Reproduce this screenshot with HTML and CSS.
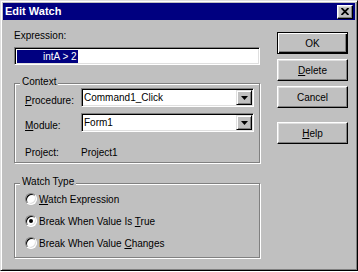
FILE: index.html
```html
<!DOCTYPE html>
<html>
<head>
<meta charset="utf-8">
<link rel="stylesheet" href="styles.css">
</head>
<body>
<div class="window">
  <div class="titlebar">
    <span class="title">Edit Watch</span>
    <span class="close"><svg width="8" height="7" viewBox="0 0 8 7"><path d="M0.5 0 L7.5 7 M7.5 0 L0.5 7" stroke="#000" stroke-width="1.8"/></svg></span>
  </div>
  <div class="content">
    <div class="main">
      <div class="label">Expression:</div>
      <div class="textbox"><span class="sel">intA &gt; 2</span></div>
      <fieldset class="group context">
        <legend>Context</legend>
        <div class="row first">
          <span class="lbl"><u>P</u>rocedure:</span>
          <div class="combo"><span class="val">Command1_Click</span><span class="drop"><svg width="7" height="4" viewBox="0 0 7 4"><path d="M0 0 H7 L3.5 4 Z" fill="#000"/></svg></span></div>
        </div>
        <div class="row second">
          <span class="lbl"><u>M</u>odule:</span>
          <div class="combo"><span class="val">Form1</span><span class="drop"><svg width="7" height="4" viewBox="0 0 7 4"><path d="M0 0 H7 L3.5 4 Z" fill="#000"/></svg></span></div>
        </div>
        <div class="row project">
          <span class="lbl plain">Project:</span>
          <span>Project1</span>
        </div>
      </fieldset>
      <fieldset class="group watch">
        <legend>Watch Type</legend>
        <div class="radio first"><span class="circle"></span><span><u>W</u>atch Expression</span></div>
        <div class="radio"><span class="circle on"></span><span>Break When Value Is <u>T</u>rue</span></div>
        <div class="radio"><span class="circle"></span><span>Break When Value <u>C</u>hanges</span></div>
      </fieldset>
    </div>
    <div class="buttons">
      <div class="btn default">OK</div>
      <div class="btn"><u>D</u>elete</div>
      <div class="btn">Cancel</div>
      <div class="btn help"><u>H</u>elp</div>
    </div>
  </div>
</div>
</body>
</html>
```

FILE: styles.css
```css
html, body {
  margin: 0;
  padding: 0;
  background: #ffffff;
}
body {
  font-family: "Liberation Sans", Arial, sans-serif;
  font-size: 10px;
  color: #000;
}
.window {
  box-sizing: border-box;
  width: 358px;
  height: 271px;
  background: #c0c0c0;
  border: 1px solid;
  border-color: #dfdfdf #000 #000 #dfdfdf;
  box-shadow: inset 1px 1px #fff, inset -1px -1px #808080;
  padding: 2px;
}
.titlebar {
  height: 17px;
  background: #000080;
  display: flex;
  align-items: center;
  justify-content: space-between;
  padding: 0 2px;
}
.title {
  color: #fff;
  font-weight: bold;
  font-size: 11px;
  line-height: 13px;
}
.close {
  box-sizing: border-box;
  width: 16px;
  height: 14px;
  background: #c0c0c0;
  border: 1px solid;
  border-color: #fff #000 #000 #fff;
  box-shadow: inset -1px -1px #808080, inset 1px 1px #dfdfdf;
  display: flex;
  align-items: center;
  justify-content: center;
}
.content {
  display: flex;
  padding-left: 11px;
}
.main {
  width: 246px;
  padding-top: 9px;
}
.label {
  line-height: 13px;
}
.textbox {
  box-sizing: border-box;
  margin-top: 5px;
  width: 246px;
  height: 18px;
  background: #fff;
  border: 1px solid;
  border-color: #808080 #fff #fff #808080;
  box-shadow: inset 1px 1px #000, inset -1px -1px #dfdfdf;
  padding: 2px 0 0 2px;
  display: flex;
  align-items: flex-start;
}
.sel {
  background: #000080;
  color: #fff;
  line-height: 13px;
  padding: 0 1px 0 26px;
}
.group {
  box-sizing: border-box;
  width: 246px;
  margin: 0;
  padding: 0 4px 3px 5px;
  border: 1px solid #808080;
  box-shadow: inset 1px 1px #fff, 1px 1px #fff;
  min-inline-size: 0;
}
.group legend {
  padding: 0 2px 3px;
  line-height: 11px;
  background: #c0c0c0;
}
.context {
  margin-top: 11px;
}
.watch {
  margin-top: 13px;
}
.row {
  display: flex;
  align-items: center;
  padding-left: 5px;
}
.row.first {
  margin-top: -2px;
}
.row.second {
  margin-top: 6px;
}
.row.project {
  margin-top: 14px;
  line-height: 13px;
}
.lbl {
  width: 56px;
  flex: none;
  padding-top: 5px;
  line-height: 13px;
}
.lbl.plain {
  padding-top: 0;
}
.combo {
  box-sizing: border-box;
  width: 173px;
  height: 19px;
  background: #fff;
  border: 1px solid;
  border-color: #808080 #fff #fff #808080;
  box-shadow: inset 1px 1px #000, inset -1px -1px #dfdfdf;
  padding: 1px;
  display: flex;
  align-items: stretch;
}
.val {
  flex: 1;
  line-height: 15px;
  padding-left: 1px;
}
.drop {
  box-sizing: border-box;
  width: 16px;
  background: #c0c0c0;
  border: 1px solid;
  border-color: #dfdfdf #000 #000 #dfdfdf;
  box-shadow: inset 1px 1px #fff, inset -1px -1px #808080;
  display: flex;
  align-items: center;
  justify-content: center;
}
.radio {
  height: 22px;
  display: flex;
  align-items: center;
  padding-left: 5px;
  gap: 2px;
}
.radio.first {
  margin-top: -2px;
}
.circle {
  box-sizing: border-box;
  width: 12px;
  height: 12px;
  border-radius: 50%;
  background: #fff;
  border: 1px solid;
  border-color: #808080 #fff #fff #808080;
  box-shadow: inset 1px 1px #000, inset -1px -1px #dfdfdf;
  display: flex;
  align-items: center;
  justify-content: center;
  flex: none;
}
.circle.on::after {
  content: "";
  width: 4px;
  height: 4px;
  border-radius: 50%;
  background: #000;
}
.buttons {
  margin-left: 17px;
  padding-top: 12px;
  display: flex;
  flex-direction: column;
  gap: 5px;
}
.btn {
  box-sizing: border-box;
  width: 71px;
  height: 22px;
  border: 1px solid;
  border-color: #fff #000 #000 #fff;
  box-shadow: inset -1px -1px #808080, inset 1px 1px #dfdfdf;
  display: flex;
  align-items: center;
  justify-content: center;
  line-height: 13px;
}
.btn.default {
  border: 1px solid #000;
  box-shadow: inset 1px 1px #fff, inset -1px -1px #000, inset -2px -2px #808080;
}
.btn.help {
  margin-top: 9px;
}
```
